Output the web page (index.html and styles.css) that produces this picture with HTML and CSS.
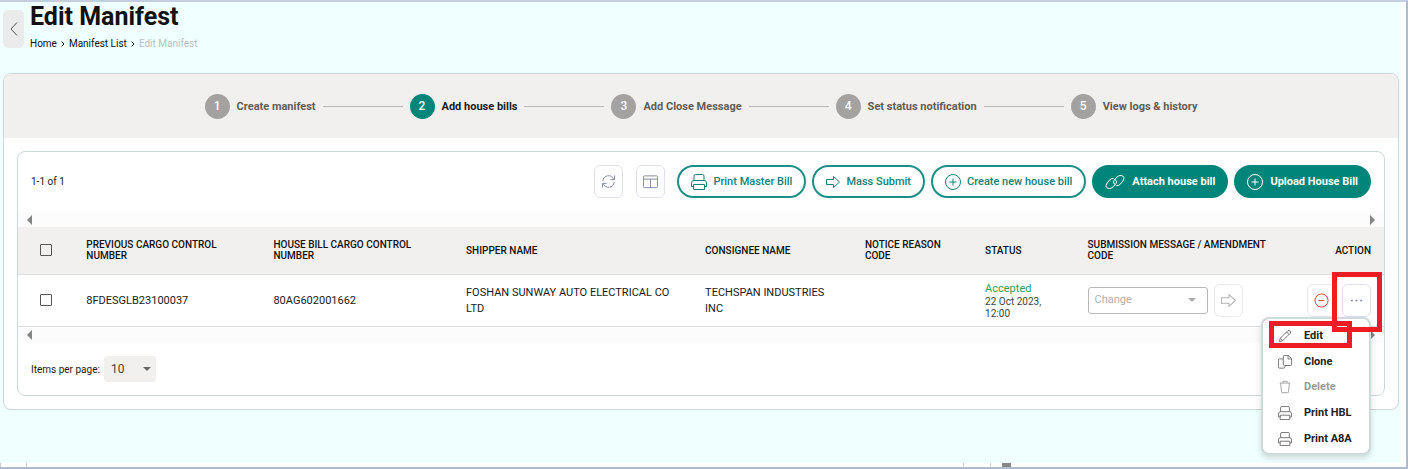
FILE: index.html
```
<!DOCTYPE html>
<html lang="en">
<head>
    <meta charset="UTF-8">
    <title>Edit Manifest</title>
    <link rel="stylesheet" href="styles.css">
</head>
<body>
<svg class="sprite" aria-hidden="true">
    <symbol id="i-print" viewBox="0 0 16 16">
        <path d="M3 6.500V2q0-1.500 1.500-1.500h7Q13 .5 13 2v4.500M2.500 12.500H.500V9q0-2.500 2.500-2.500h10q2.500 0 2.500 2.500v3.500h-2M2.500 10.500h11v5h-11z"/>
    </symbol>
    <symbol id="i-arrow" viewBox="1 1 14 14">
        <path d="M1.500 5.500h7V2.500L14.500 8l-6 5.500v-3h-7z"/>
    </symbol>
    <symbol id="i-plus" viewBox="0 0 16 16">
        <circle cx="8" cy="8" r="7.500"/>
        <path d="M8 4.500v7M4.500 8h7"/>
    </symbol>
    <symbol id="i-minus" viewBox="0 0 16 16">
        <circle cx="8" cy="8" r="7"/>
        <path d="M5 8h6"/>
    </symbol>
    <symbol id="i-link" viewBox="0 0 20 16">
        <path d="M10.500 10.500Q7 9.500 9 6.500l3-3.500q2-2 4.500-1.500 3.500 1 2 4.500L15.500 10q-2 2-4 1.500M9.500 5.500q3.500 1 1.500 4l-3 3.500q-2 2-4.500 1.500-3.500-1-2-4.500L4.500 6q2-2 4-1.500"/>
    </symbol>
    <symbol id="i-refresh" viewBox="0 0 16 16">
        <path d="M2 7.500a6 6 0 0 1 11.500-2M14.500 1.500v4.500H10M14 8.500a6 6 0 0 1-11.500 2M1.500 14.500V10H6"/>
    </symbol>
    <symbol id="i-columns" viewBox="0 0 16 16">
        <rect x="0.500" y="2" width="15" height="12.500" rx="1"/>
        <path d="M.5 5.500h15M8 5.500v9"/>
    </symbol>
    <symbol id="i-pencil" viewBox="0 0 16 16">
        <path d="M1.500 14.500l1.200-4L11.200 2q1.300-1 2.600.2t.2 2.600L5.500 13.300zM9.800 3.400l2.800 2.800M2.700 10.500l2.800 2.800"/>
    </symbol>
    <symbol id="i-copy" viewBox="0 0 16 16">
        <path d="M5.500 4.500h-4q-1 0-1 1v8q0 1.500 1 1.500h5q1.500 0 1.500-1.500v-1.500M7 .500h5l3.500 3.500v6.500q0 1.500-1 1.500h-7q-1.500 0-1.500-1.500v-8.500q0-1.500 1-1.500zM11.500.500v4h4"/>
    </symbol>
    <symbol id="i-trash" viewBox="0 0 16 16">
        <path d="M2 3.500h12M5.500 3V1.500h5V3M3 3.500l1 10q0 1 1 1h6q1 0 1-1l1-10"/>
    </symbol>
    <symbol id="i-dots" viewBox="0 0 16 16">
        <path stroke-width="1.500" d="M2 8h2M7 8h2M12 8h2"/>
    </symbol>
</svg>

<main class="page">
    <header class="head">
        <button class="back" type="button" aria-label="Back">
            <svg viewBox="0 0 8 14"><path d="M7 .5L1 7l6 6.500"/></svg>
        </button>
        <div>
            <h1>Edit Manifest</h1>
            <nav class="crumbs">
                <a href="#">Home</a>
                <svg viewBox="0 0 4 6"><path d="M.5.5L3 3 .5 5.500"/></svg>
                <a href="#">Manifest List</a>
                <svg viewBox="0 0 4 6"><path d="M.5.5L3 3 .5 5.500"/></svg>
                <span>Edit Manifest</span>
            </nav>
        </div>
    </header>

    <section class="card">
        <ol class="steps">
            <li><b>1</b>Create manifest</li>
            <li class="active"><b>2</b>Add house bills</li>
            <li><b>3</b>Add Close Message</li>
            <li><b>4</b>Set status notification</li>
            <li><b>5</b>View logs &amp; history</li>
        </ol>

        <div class="panel">
            <div class="toolbar">
                <span class="count">1-1 of 1</span>
                <div class="tools">
                    <button class="icon-btn" type="button" aria-label="Refresh"><svg><use href="#i-refresh"/></svg></button>
                    <button class="icon-btn" type="button" aria-label="Columns"><svg><use href="#i-columns"/></svg></button>
                </div>
                <div class="buttons">
                    <button class="btn" type="button"><svg><use href="#i-print"/></svg>Print Master Bill</button>
                    <button class="btn" type="button"><svg class="small"><use href="#i-arrow"/></svg>Mass Submit</button>
                    <button class="btn" type="button"><svg><use href="#i-plus"/></svg>Create new house bill</button>
                    <button class="btn solid" type="button"><svg class="wide"><use href="#i-link"/></svg>Attach house bill</button>
                    <button class="btn solid" type="button"><svg><use href="#i-plus"/></svg>Upload House Bill</button>
                </div>
            </div>

            <div class="scroll"><i class="left"></i><i class="right"></i></div>
            <table>
                <colgroup>
                    <col class="c-check"><col class="c-prev"><col class="c-house"><col class="c-ship"><col class="c-cons">
                    <col class="c-notice"><col class="c-status"><col class="c-msg"><col>
                </colgroup>
                <thead>
                <tr>
                    <th class="check"><input type="checkbox" aria-label="Select all"></th>
                    <th>PREVIOUS CARGO CONTROL NUMBER</th>
                    <th>HOUSE BILL CARGO CONTROL NUMBER</th>
                    <th>SHIPPER NAME</th>
                    <th>CONSIGNEE NAME</th>
                    <th>NOTICE REASON CODE</th>
                    <th>STATUS</th>
                    <th>SUBMISSION MESSAGE / AMENDMENT CODE</th>
                    <th class="action">ACTION</th>
                </tr>
                </thead>
                <tbody>
                <tr>
                    <td class="check"><input type="checkbox" aria-label="Select row"></td>
                    <td>8FDESGLB23100037</td>
                    <td>80AG602001662</td>
                    <td>FOSHAN SUNWAY AUTO ELECTRICAL CO LTD</td>
                    <td>TECHSPAN INDUSTRIES INC</td>
                    <td></td>
                    <td class="status"><span class="ok">Accepted</span>22 Oct 2023, 12:00</td>
                    <td>
                        <div class="row">
                            <select class="change" aria-label="Submission message" disabled><option>Change</option></select>
                            <button class="icon-btn off" type="button" aria-label="Submit" disabled><svg><use href="#i-arrow"/></svg></button>
                        </div>
                    </td>
                    <td class="action">
                        <div class="row end">
                            <button class="icon-btn remove" type="button" aria-label="Remove"><svg><use href="#i-minus"/></svg></button>
                            <button class="icon-btn more" type="button" aria-label="More"><svg><use href="#i-dots"/></svg></button>
                            <div class="menu">
                                <button class="marked" type="button"><svg><use href="#i-pencil"/></svg>Edit</button>
                                <button type="button"><svg><use href="#i-copy"/></svg>Clone</button>
                                <button type="button" disabled><svg><use href="#i-trash"/></svg>Delete</button>
                                <button type="button"><svg><use href="#i-print"/></svg>Print HBL</button>
                                <button type="button"><svg><use href="#i-print"/></svg>Print A8A</button>
                            </div>
                        </div>
                    </td>
                </tr>
                </tbody>
            </table>
            <div class="scroll"><i class="left"></i><i class="right"></i></div>

            <div class="pager">
                <label for="per-page">Items per page:</label>
                <select id="per-page"><option>10</option></select>
            </div>
        </div>
    </section>
</main>
<div class="strip"><i></i><i></i><i></i><i></i><i class="block"></i></div>
<span class="handle side"></span>
<span class="handle foot"></span>
</body>
</html>
```
FILE: styles.css
```
*,
*::before,
*::after {
    box-sizing: border-box;
}
body {
    margin: 0;
    min-height: 100vh;
    display: flex;
    flex-direction: column;
    position: relative;
    border: solid #adbbd0;
    border-width: 2px 2px 2px 0;
    border-top-color: #c3cfe0;
    background: #fff;
    font-family: Roboto, "Liberation Sans", sans-serif;
    font-size: 11px;
    color: #1a1a1a;
    overflow: hidden;
}
.sprite {
    display: none;
}
svg {
    width: 16px;
    height: 16px;
    flex: none;
    fill: none;
    stroke: currentColor;
    stroke-width: 1;
}
button,
select {
    font: inherit;
    margin: 0;
}
.page {
    flex: 1;
    margin-right: 5px;
    padding: 0 2px 0 3px;
    background: #f0ffff;
}

/* title */
.head {
    display: flex;
    gap: 6px;
    height: 71px;
}
.back {
    width: 21px;
    height: 38px;
    margin-top: 8px;
    padding: 0;
    border: 0;
    border-radius: 5px;
    background: #ebebeb;
    color: #555;
}
.back svg {
    width: 8px;
    height: 14px;
    display: block;
    margin: auto;
}
h1 {
    margin: 0;
    font-size: 25px;
    line-height: 30px;
    font-weight: 700;
    color: #111;
}
.crumbs {
    display: flex;
    align-items: center;
    gap: 4px;
    margin-top: 6px;
    font-size: 10px;
    line-height: 12px;
    color: #b4c2c2;
}
.crumbs a {
    color: #111;
    text-decoration: none;
}
.crumbs svg {
    width: 4px;
    height: 6px;
    color: #111;
}

.card {
    border: 1px solid #cdd8d8;
    border-radius: 8px;
    background: #fff;
}

/* wizard steps */
.steps {
    display: flex;
    justify-content: center;
    align-items: center;
    gap: 7px;
    height: 64px;
    margin: 0 0 13px;
    padding: 0;
    list-style: none;
    border-radius: 7px 7px 0 0;
    background: #f2f0ee;
    font-weight: 700;
    color: #625d59;
}
.steps li {
    display: flex;
    align-items: center;
    gap: 7px;
}
.steps li + li::before {
    content: "";
    width: 80px;
    height: 1px;
    background: #b8b8b8;
}
.steps b {
    width: 25px;
    line-height: 25px;
    border-radius: 50%;
    background: #a3a2a0;
    color: #fff;
    font-size: 12px;
    font-weight: 500;
    text-align: center;
}
.steps .active {
    color: #1a1a1a;
}
.steps .active b {
    background: #00857a;
}

.panel {
    margin: 0 13px 13px;
    border: 1px solid #cdd8d8;
    border-radius: 8px;
}
.toolbar {
    display: flex;
    align-items: center;
    height: 60px;
    padding: 0 13px 1px;
}
.count,
.pager {
    font-size: 10px;
}
.tools {
    display: flex;
    gap: 13px;
    margin: 0 12px 0 auto;
}
.buttons {
    display: flex;
    gap: 6px;
}
.btn {
    display: flex;
    align-items: center;
    gap: 6px;
    height: 33px;
    padding: 0 12px;
    border: 2px solid #1c8f85;
    border-radius: 17px;
    background: #fff;
    color: #137f76;
    font-weight: 500;
}
.btn svg.wide {
    width: 20px;
}
.btn svg.small {
    width: 14px;
    height: 14px;
}
.btn.solid {
    gap: 7px;
    padding: 0 11px;
    border-color: #00857a;
    background: #00857a;
    color: #fff;
    font-weight: 700;
}
.icon-btn {
    display: flex;
    align-items: center;
    justify-content: center;
    width: 29px;
    height: 33px;
    padding: 0;
    border: 1px solid #dfe0ef;
    border-radius: 6px;
    background: #fff;
    color: #7f87a8;
}
.icon-btn svg {
    width: 15px;
    height: 15px;
}
.icon-btn.off {
    border-color: #e9e9ef;
    color: #b5b5b5;
}
.icon-btn.remove {
    border-color: #e9e9ef;
    color: #e2401f;
}

/* table scrollbars */
.scroll {
    display: flex;
    align-items: center;
    justify-content: space-between;
    height: 15px;
    padding: 0 9px;
    background: #fcfcfc;
}
.scroll i {
    border: 5px solid transparent;
}
.scroll .left {
    border-left-width: 0;
    border-right-color: #858585;
}
.scroll .right {
    border-right-width: 0;
    border-left-color: #858585;
}

table {
    width: 100%;
    margin-bottom: 1px;
    table-layout: fixed;
    border-collapse: collapse;
}
.c-check { width: 5%; }
.c-prev { width: 13.7%; }
.c-house { width: 14.1%; }
.c-ship { width: 17.5%; }
.c-cons { width: 11.7%; }
.c-notice { width: 8.8%; }
.c-status { width: 7.5%; }
.c-msg { width: 15%; }
th,
td {
    padding: 0 24px 0 0;
    border-bottom: 1px solid #dedede;
    text-align: left;
    vertical-align: middle;
}
th {
    height: 47px;
    background: #f2f0ee;
    font-size: 10px;
    line-height: 11px;
    font-weight: 500;
    color: #111;
}
td {
    height: 52px;
    padding-top: 2px;
    line-height: 16px;
}
.check {
    padding: 0 0 0 22px;
}
.check input {
    appearance: none;
    display: block;
    width: 12px;
    height: 12px;
    margin: 0;
    border: 1px solid #555;
    border-radius: 1px;
    background: #fff;
}
th.check input {
    background: none;
}
.action {
    padding-right: 13px;
    text-align: right;
}
.status {
    font-size: 10px;
    line-height: 12px;
    color: #444;
}
.ok {
    display: block;
    font-size: 11px;
    line-height: 14px;
    color: #2f9e55;
}
.row {
    display: flex;
    gap: 6px;
    position: relative;
    margin-top: -2px;
}
.row.end {
    justify-content: flex-end;
}

select {
    appearance: none;
    border-radius: 3px;
}
.change {
    width: 120px;
    height: 27px;
    margin-top: 3px;
    padding: 0 6px;
    border: 1px solid #b8b8b8;
    background: #fff url("data:image/svg+xml,%3Csvg xmlns='http://www.w3.org/2000/svg' width='8' height='4'%3E%3Cpath d='M0 0h8L4 4z' fill='%23aaa'/%3E%3C/svg%3E") no-repeat right 11px center;
    color: #b0b0b0;
    opacity: 1;
}

/* row menu */
.more::after {
    content: "";
    position: absolute;
    z-index: 2;
    top: -12px;
    right: -11px;
    width: 50px;
    height: 60px;
    border: 5px solid #ee1c25;
}
.menu {
    position: absolute;
    z-index: 1;
    top: 33px;
    right: 0;
    display: grid;
    grid-auto-rows: 1fr;
    width: 110px;
    height: 138px;
    padding: 5px 0 1px;
    border: 2px solid #cfdada;
    border-radius: 8px;
    background: #fff;
    box-shadow: 0 3px 6px rgba(0, 0, 0, .15);
}
.menu button {
    display: flex;
    align-items: center;
    gap: 12px;
    position: relative;
    padding: 0 0 0 15px;
    border: 0;
    background: none;
    color: #222;
    font-weight: 700;
}
.menu svg {
    width: 14px;
    height: 14px;
    color: #666;
}
.menu button:disabled,
.menu button:disabled svg {
    color: #999;
}
.marked::after {
    content: "";
    position: absolute;
    top: -3px;
    left: 6px;
    width: 83px;
    height: 27px;
    border: 5px solid #ee1c25;
}

.pager {
    display: flex;
    align-items: center;
    gap: 4px;
    height: 52px;
    padding: 1px 13px 0;
}
.pager select {
    width: 52px;
    height: 26px;
    padding: 0 7px;
    border: 0;
    font-size: 12px;
    color: #444;
    background: #f2f0ee url("data:image/svg+xml,%3Csvg xmlns='http://www.w3.org/2000/svg' width='8' height='4'%3E%3Cpath d='M0 0h8L4 4z' fill='%23666'/%3E%3C/svg%3E") no-repeat right 5px center;
}

/* bottom edge of the window */
.strip {
    display: grid;
    grid-template-columns: 26px 937fr 27px 12px 404fr;
    height: 4px;
}
.strip i {
    border-left: 1px solid #ccc;
}
.strip .block {
    border-left: 9px solid #888;
}
.handle {
    position: absolute;
    width: 4px;
    height: 4px;
    border: 1px solid #444;
    background: #fff;
}
.handle.side {
    top: 50%;
    right: -4px;
}
.handle.foot {
    left: 50%;
    bottom: -4px;
}
```
